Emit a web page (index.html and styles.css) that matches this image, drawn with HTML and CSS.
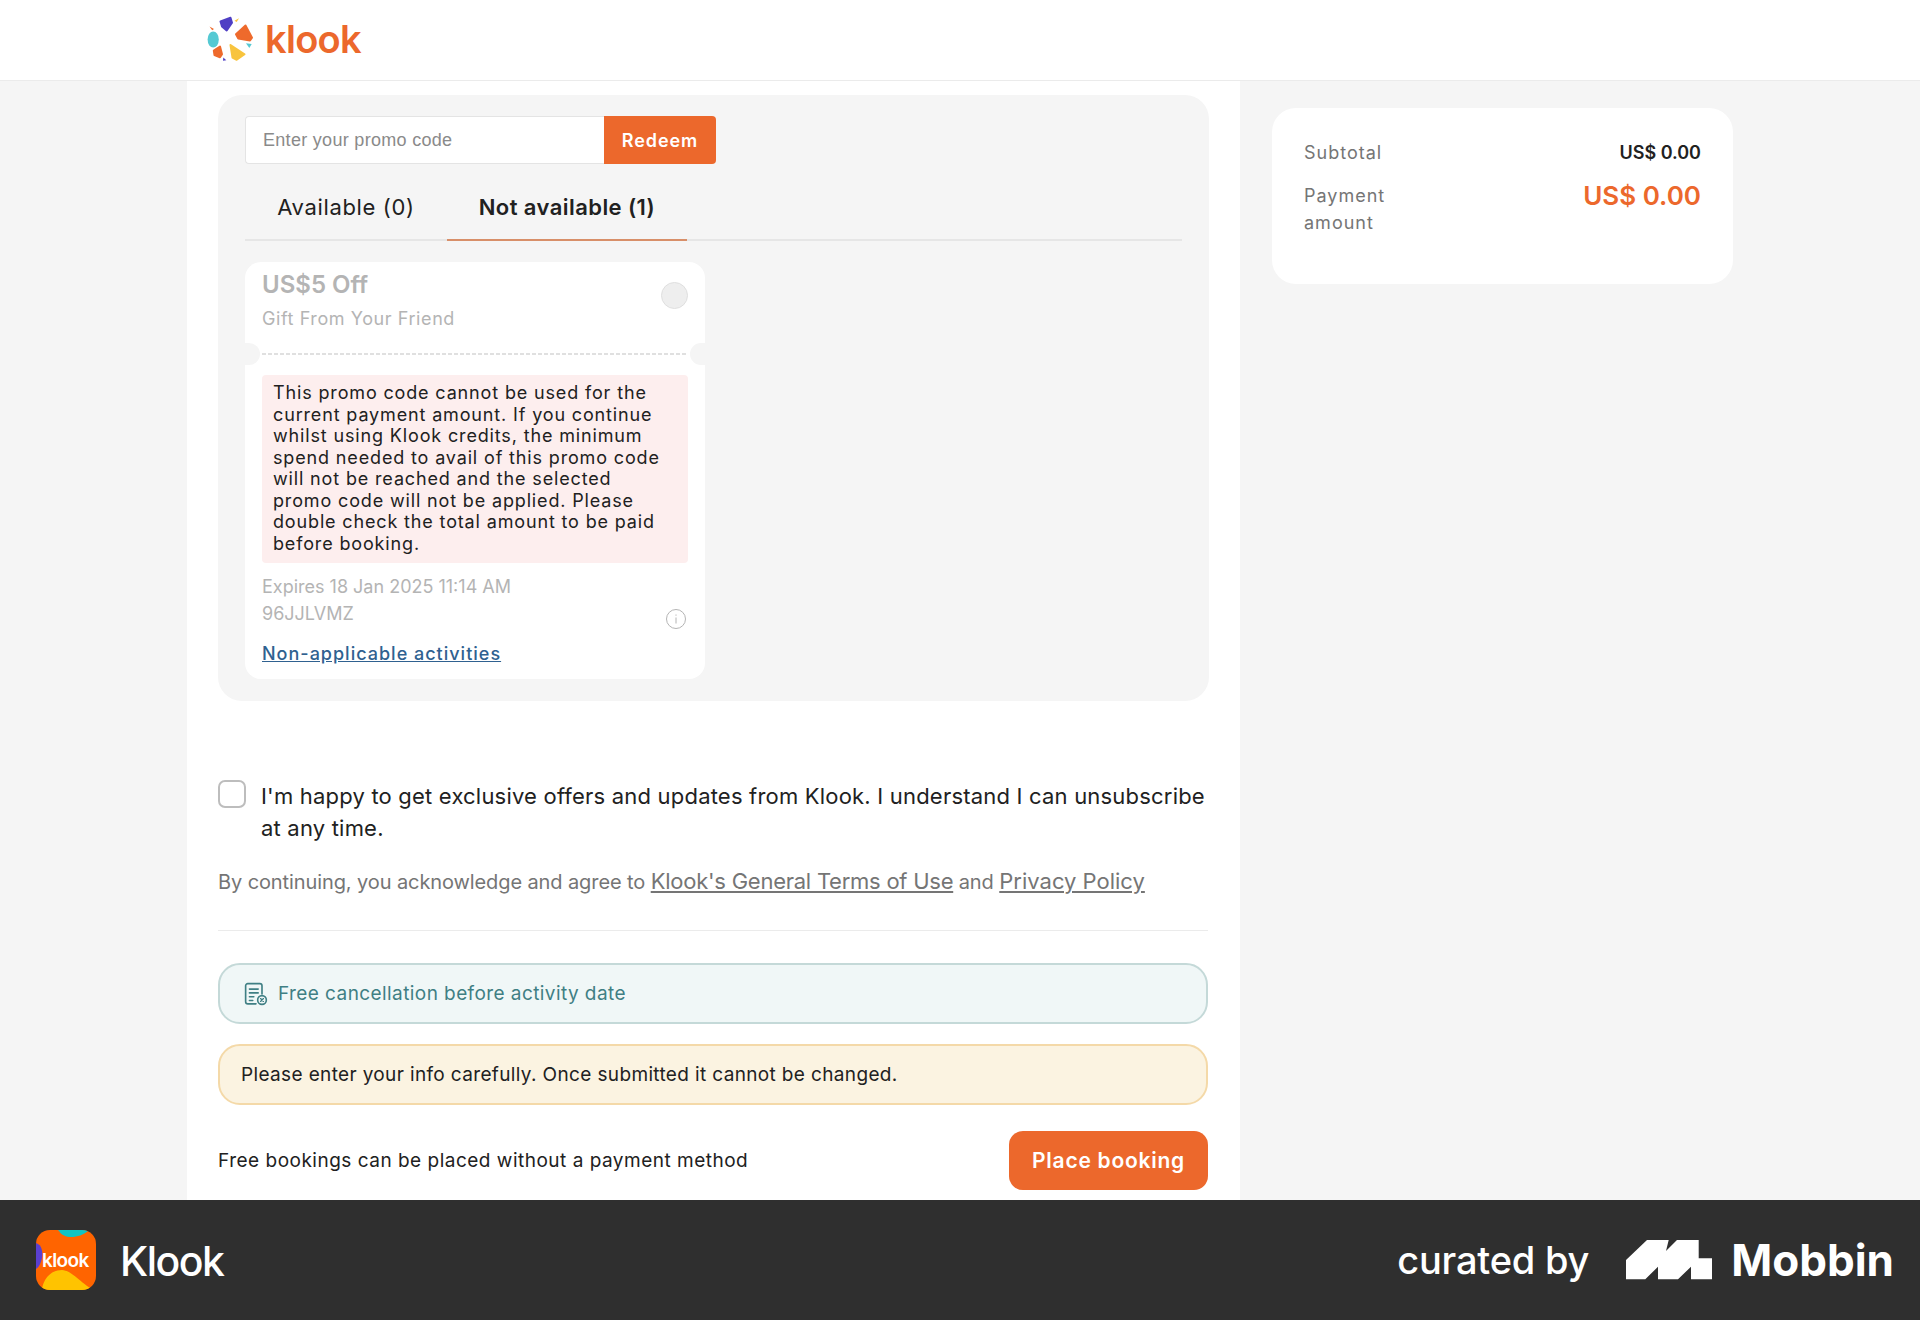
FILE: index.html
```html
<!DOCTYPE html>
<html lang="en">
  <head>
    <meta charset="UTF-8" />
    <title>Klook - Checkout</title>
    <link rel="stylesheet" href="styles.css">
  </head>
  <body>
    <header class="topbar">
      <svg class="logo-mark" viewBox="0 0 50 50" width="50" height="50">
        <g stroke-width="2" stroke-linejoin="round">
          <polygon fill="#4f3fc4" stroke="#4f3fc4" points="15.5,7.5 25.5,3.8 27,8.7 21.7,16.5 17,12.5" />
          <polygon fill="#ee6a2c" stroke="#ee6a2c" points="31,20.3 40.5,11.5 47,23.7 45,26.5 33.3,24.5" />
          <ellipse fill="#55c9d3" cx="8.2" cy="25.5" rx="5.6" ry="8" />
          <polygon fill="#ee6a2c" stroke="#ee6a2c" points="8.8,36.5 15,32.5 17,40.3 15,43.3 9.5,41" />
          <polygon fill="#f8c43e" stroke="#f8c43e" points="25.5,31 39.5,40.3 31.7,45.8 27.5,43.5" />
          <polygon fill="#55c9d3" points="41,29.3 46.7,30 44.3,34" />
          <polygon fill="#f8c43e" points="29.5,6.7 34,4.3 31.7,8" />
          <polygon fill="#ee6a2c" points="4.5,12.5 9,15 7.2,16.3" />
          <polygon fill="#4f3fc4" points="18.3,43.5 21.3,46.3 18,46.7" />
        </g>
      </svg>
      <span class="wordmark">klook</span>
    </header>

    <div class="page">
      <main class="main-col">
        <section class="promo-panel">
          <div class="promo-form">
            <div class="promo-input">Enter your promo code</div>
            <button class="redeem-btn">Redeem</button>
          </div>

          <div class="tabs">
            <div class="tab">Available (0)</div>
            <div class="tab tab-active">Not available (1)</div>
          </div>

          <div class="ticket">
            <div class="ticket-top">
              <div>
                <div class="ticket-title">US$5 Off</div>
                <div class="ticket-sub">Gift From Your Friend</div>
              </div>
              <div class="ticket-radio"></div>
            </div>
            <div class="ticket-cut"></div>
            <div class="ticket-bottom">
              <div class="ticket-warning">This promo code cannot be used for the current payment amount. If you continue whilst using Klook credits, the minimum spend needed to avail of this promo code will not be reached and the selected promo code will not be applied. Please double check the total amount to be paid before booking.</div>
              <div class="ticket-meta">
                <div>
                  <div>Expires 18 Jan 2025 11:14 AM</div>
                  <div>96JJLVMZ</div>
                </div>
                <svg class="info-icon" viewBox="0 0 20 20" width="20" height="20" fill="none" stroke="#b4b4b4">
                  <circle cx="10" cy="10" r="9.5" />
                  <path d="M10 8.5v6M10 5.5v1.2" />
                </svg>
              </div>
              <a class="ticket-link" href="#">Non-applicable activities</a>
            </div>
          </div>
        </section>

        <div class="offers-row">
          <div class="checkbox"></div>
          <p>I'm happy to get exclusive offers and updates from Klook. I understand I can unsubscribe at any time.</p>
        </div>

        <p class="terms">By continuing, you acknowledge and agree to <a href="#">Klook's General Terms of Use</a> and <a class="policy-link" href="#">Privacy Policy</a></p>

        <div class="divider"></div>

        <div class="notice notice-teal">
          <svg viewBox="0 0 22 22" width="24" height="24" fill="none" stroke="#3f7f84" stroke-width="1.5" stroke-linecap="round">
            <path d="M11 20H3.5a2 2 0 0 1-2-2V3.5a2 2 0 0 1 2-2h11a2 2 0 0 1 2 2V11" />
            <path d="M5 6.5h8M5 10h8M5 13.5h4M5 17h3" />
            <circle cx="16.5" cy="16.5" r="4" />
            <path d="M15.2 15.2l2.6 2.6M17.8 15.2l-2.6 2.6" stroke-width="1.2" />
          </svg>
          <span>Free cancellation before activity date</span>
        </div>

        <div class="notice notice-yellow">Please enter your info carefully. Once submitted it cannot be changed.</div>

        <div class="booking-row">
          <span>Free bookings can be placed without a payment method</span>
          <button class="booking-btn">Place booking</button>
        </div>
      </main>

      <aside class="summary">
        <div class="summary-row">
          <span class="summary-label">Subtotal</span>
          <span class="summary-value">US$ 0.00</span>
        </div>
        <div class="summary-row summary-total">
          <span class="summary-label">Payment<br />amount</span>
          <span class="summary-amount">US$ 0.00</span>
        </div>
      </aside>
    </div>

    <footer class="credit">
      <div class="credit-app">
        <div class="app-icon">
          <svg viewBox="0 0 60 60" width="60" height="60">
            <rect width="60" height="60" fill="#ff6400" />
            <path d="M22 0h30v1c-8 7-24 9-29 0z" fill="#10c4c4" />
            <path d="M0 13c6 2 7 9 6 15-1 5-3 9-6 11z" fill="#5a3fd0" />
            <path d="M6 60c1-10 8-20 20-20 11 1 18 13 32 20z" fill="#ffc300" />
          </svg>
          <span class="app-icon-text">klook</span>
        </div>
        <span class="app-name">Klook</span>
      </div>
      <div class="credit-mobbin">
        <span class="curated">curated by</span>
        <svg viewBox="0 0 86 39.3" width="86" height="39.3">
          <polygon fill="#fff" points="0,20 21,0 42.7,0 40,11 51,0 72.7,0 72.7,18.3 86,18.3 86,39.3 65,39.3 65,26.7 52,39.3 32,39.3 32,26.7 19.3,39.3 0,39.3" />
        </svg>
        <span class="mobbin-name">Mobbin</span>
      </div>
    </footer>
  </body>
</html>
```

FILE: styles.css
```css
* {
  box-sizing: border-box;
}

body {
  margin: 0;
  height: 1320px;
  overflow: hidden;
  display: flex;
  flex-direction: column;
  background-color: #f5f5f5;
  color: #212121;
  font-family: Inter, "Liberation Sans", sans-serif;
}

button {
  font-family: inherit;
  border: none;
  color: #fff;
}

p {
  margin: 0;
}

.topbar {
  height: 81px;
  flex-shrink: 0;
  display: flex;
  align-items: center;
  gap: 10px;
  padding: 0 0 2px 205px;
  background: #fff;
  border-bottom: 1px solid #ebebeb;
}

.wordmark {
  color: #ec682c;
  font-size: 38px;
  font-weight: 600;
  letter-spacing: -0.7px;
}

.page {
  flex: 1;
  min-height: 0;
  display: flex;
  align-items: flex-start;
  padding-left: 187px;
  gap: 32px;
}

.main-col {
  width: 1053px;
  height: 1119px;
  padding: 14px 31px 0;
  background: #fff;
  overflow: hidden;
}

.promo-panel {
  height: 606px;
  padding: 21px 27px 0;
  background: #f5f5f5;
  border-radius: 24px;
}

.promo-form {
  display: flex;
  width: 471px;
  height: 48px;
}

.promo-input {
  flex: 1;
  display: flex;
  align-items: center;
  padding-left: 17px;
  background: #fff;
  border: 1px solid #e4e4e4;
  border-right: none;
  border-radius: 4px 0 0 4px;
  color: #8a8a8a;
  font-family: "Liberation Sans", sans-serif;
  font-size: 18px;
  letter-spacing: 0.3px;
}

.redeem-btn {
  width: 112px;
  background: #ec682c;
  border-radius: 0 4px 4px 0;
  font-size: 18px;
  font-weight: 600;
  letter-spacing: 0.9px;
}

.tabs {
  display: flex;
  height: 77px;
  margin-bottom: 21px;
  border-bottom: 2px solid #e6e6e6;
}

.tab {
  display: flex;
  align-items: center;
  justify-content: center;
  height: 77px;
  padding-top: 9px;
  font-size: 22px;
  letter-spacing: 0.65px;
}

.tab:first-child {
  width: 202px;
}

.tab-active {
  width: 240px;
  padding-top: 11px;
  font-weight: 600;
  letter-spacing: 0.43px;
  border-bottom: 2px solid #d88f69;
}

.ticket {
  width: 460px;
  height: 417px;
  position: relative;
  background: #fff;
  border-radius: 16px;
  color: #b4b4b4;
  font-size: 18px;
}

.ticket-top {
  display: flex;
  justify-content: space-between;
  height: 91px;
  padding: 7px 17px 0;
}

.ticket-title {
  font-size: 24px;
  font-weight: 600;
  line-height: 32px;
}

.ticket-sub {
  margin-top: 3px;
  line-height: 30px;
  letter-spacing: 0.58px;
}

.ticket-radio {
  width: 27px;
  height: 27px;
  margin-top: 13px;
  background: #eeeeee;
  border: 1px solid #dfdfdf;
  border-radius: 50%;
}

.ticket-cut {
  height: 2px;
  margin: 0 17px;
  background: repeating-linear-gradient(90deg, #e0e0e0 0 4px, transparent 4px 6px);
}

/* notches on the two sides of the dashed line */
.ticket-cut::before,
.ticket-cut::after {
  content: "";
  position: absolute;
  top: 81px;
  width: 15px;
  height: 22px;
  background: #f5f5f5;
}

.ticket-cut::before {
  left: 0;
  border-radius: 0 11px 11px 0;
}

.ticket-cut::after {
  right: 0;
  border-radius: 11px 0 0 11px;
}

.ticket-bottom {
  padding: 20px 17px 0;
}

.ticket-warning {
  height: 188px;
  padding: 7px 21px 0 11px;
  background: #fdeeee;
  border-radius: 4px;
  color: #212121;
  line-height: 21.5px;
  letter-spacing: 0.85px;
}

.ticket-meta {
  display: flex;
  justify-content: space-between;
  align-items: flex-end;
  margin-top: 10px;
  line-height: 27px;
}

.info-icon {
  margin: 0 2px -2px 0;
}

.ticket-link {
  display: block;
  margin-top: 13px;
  color: #2f6190;
  font-weight: 500;
  line-height: 27px;
  letter-spacing: 1px;
}

.offers-row {
  display: flex;
  gap: 15px;
  margin-top: 79px;
  font-size: 22px;
  line-height: 32px;
  letter-spacing: 0.2px;
}

.checkbox {
  width: 28px;
  height: 28px;
  flex-shrink: 0;
  background: #fff;
  border: 2px solid #bdbdbd;
  border-radius: 7px;
}

.terms {
  margin-top: 23px;
  color: #757575;
  font-size: 20px;
  line-height: 28px;
  letter-spacing: -0.1px;
}

.terms a {
  color: #757575;
  font-size: 22px;
  letter-spacing: -0.25px;
}

.terms .policy-link {
  letter-spacing: 0;
}

.divider {
  margin-top: 34px;
  margin-right: 1px;
  border-top: 1px solid #ebebeb;
}

.notice {
  display: flex;
  align-items: center;
  height: 61px;
  margin-right: 1px;
  border-radius: 22px;
  font-size: 19px;
}

.notice-teal {
  gap: 10px;
  margin-top: 32px;
  padding-left: 24px;
  background: #f0f7f7;
  border: 2px solid #c4d9d8;
  color: #3f7f84;
  letter-spacing: 0.42px;
}

.notice-yellow {
  margin-top: 20px;
  padding-left: 21px;
  background: #fbf3e1;
  border: 2px solid #f4d9a8;
  letter-spacing: 0.36px;
}

.booking-row {
  display: flex;
  justify-content: space-between;
  align-items: center;
  margin: 26px 1px 0 0;
  font-size: 19px;
  letter-spacing: 0.5px;
}

.booking-btn {
  width: 199px;
  height: 59px;
  background: #ec682c;
  border-radius: 14px;
  font-size: 21px;
  font-weight: 600;
  letter-spacing: 0.75px;
}

.summary {
  width: 461px;
  height: 176px;
  margin-top: 27px;
  padding: 31px 32px 0;
  background: #fff;
  border-radius: 24px;
  font-size: 18px;
}

.summary-row {
  display: flex;
  justify-content: space-between;
  align-items: flex-start;
  line-height: 27px;
}

.summary-total {
  margin-top: 5px;
  padding-top: 11px;
}

.summary-label {
  color: #757575;
  letter-spacing: 1px;
}

.summary-value {
  font-weight: 600;
}

.summary-amount {
  color: #ec682c;
  font-size: 26px;
  font-weight: 600;
}

.credit {
  height: 120px;
  flex-shrink: 0;
  display: flex;
  justify-content: space-between;
  align-items: center;
  padding: 0 26px 0 36px;
  background: #2f2f2f;
  color: #fff;
}

.credit-app {
  display: flex;
  align-items: center;
  gap: 24px;
}

.app-icon {
  position: relative;
  width: 60px;
  height: 60px;
  border-radius: 14px;
  overflow: hidden;
}

.app-icon-text {
  position: absolute;
  top: 19px;
  left: 6px;
  font-size: 19px;
  font-weight: 600;
  letter-spacing: -0.6px;
}

.app-name {
  padding-top: 2px;
  font-size: 41px;
  font-weight: 500;
  letter-spacing: -1.5px;
}

.credit-mobbin {
  display: flex;
  align-items: center;
}

.curated {
  margin-right: 37px;
  font-size: 38px;
  font-weight: 500;
  letter-spacing: -0.2px;
}

.mobbin-name {
  margin-left: 19px;
  font-size: 44px;
  font-weight: 700;
}
```
